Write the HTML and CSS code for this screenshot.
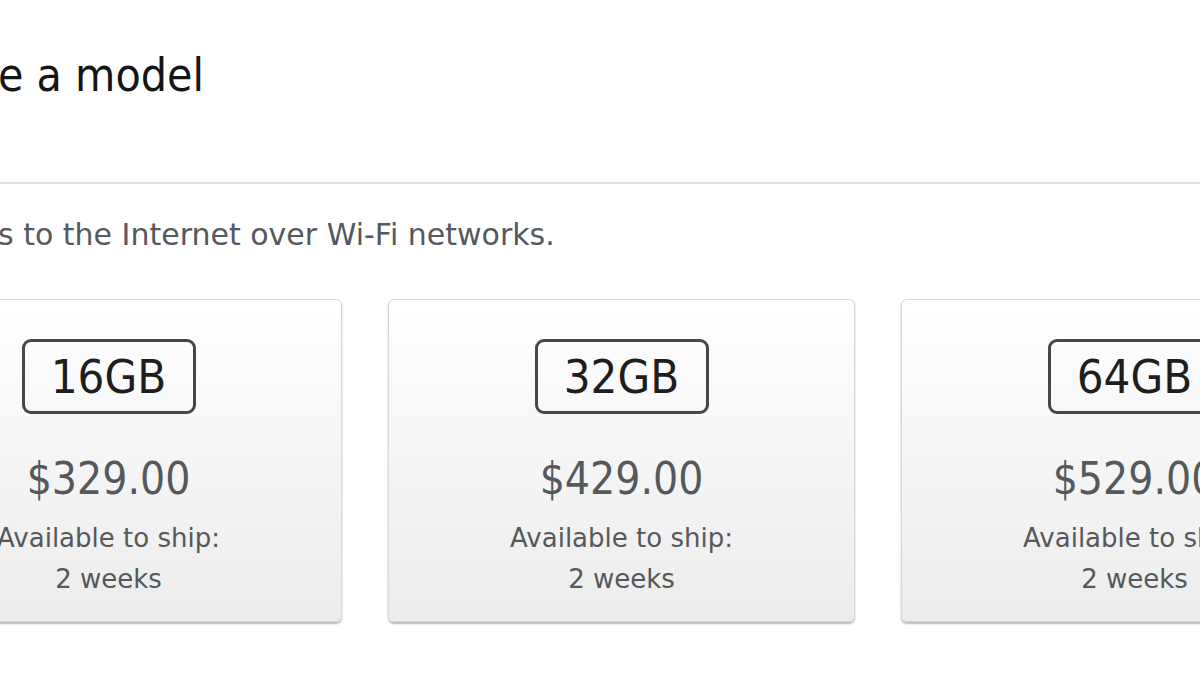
FILE: index.html
```html
<!DOCTYPE html>
<html>
<head>
<meta charset="utf-8">
<link rel="stylesheet" href="styles.css">
</head>
<body>
<div class="page">
  <h1 class="title">e a model</h1>
  <div class="rule"></div>
  <p class="lead">s to the Internet over Wi‑Fi networks.</p>
  <div class="cards">
    <div class="card">
      <div class="cap">16GB</div>
      <div class="price">$329.00</div>
      <div class="ship">Available to ship:</div>
      <div class="ship">2 weeks</div>
    </div>
    <div class="card">
      <div class="cap">32GB</div>
      <div class="price">$429.00</div>
      <div class="ship">Available to ship:</div>
      <div class="ship">2 weeks</div>
    </div>
    <div class="card">
      <div class="cap">64GB</div>
      <div class="price">$529.00</div>
      <div class="ship">Available to ship:</div>
      <div class="ship">2 weeks</div>
    </div>
  </div>
</div>
</body>
</html>
```

FILE: styles.css
```css
html, body {
  margin: 0;
  padding: 0;
  background: #fff;
  width: 1200px;
  height: 675px;
  overflow: hidden;
}
.page {
  font-family: "DejaVu Sans Condensed", "DejaVu Sans", sans-serif;
  font-stretch: condensed;
}
.title {
  margin: 52px 0 0 0;
  font-size: 46px;
  line-height: 46px;
  font-weight: normal;
  color: #151515;
  text-indent: -2px;
  white-space: nowrap;
}
.rule {
  margin-top: 84px;
  height: 2px;
  background: #dedede;
}
.lead {
  margin: 36px 0 0 0;
  font-family: "DejaVu Sans", sans-serif;
  font-stretch: normal;
  font-size: 30px;
  line-height: 30px;
  color: #55595d;
  text-indent: -2px;
  white-space: nowrap;
}
.cards {
  margin-top: 49px;
  margin-left: -125px;
  display: flex;
  gap: 46px;
}
.card {
  flex: 0 0 auto;
  width: 465px;
  height: 321px;
  border: 1px solid #d8d8d8;
  border-radius: 6px;
  background: linear-gradient(#ffffff, #ececec);
  box-shadow: 0 2px 2px rgba(0,0,0,0.28);
  display: flex;
  flex-direction: column;
  align-items: center;
  box-sizing: content-box;
}
.cap {
  margin-top: 39px;
  width: 168px;
  height: 69px;
  border: 3px solid #474747;
  border-radius: 9px;
  display: flex;
  align-items: center;
  justify-content: center;
  font-size: 47px;
  color: #1e1e1e;
}
.price {
  margin-top: 40px;
  font-size: 44px;
  line-height: 50px;
  color: #55595c;
}
.ship {
  font-family: "DejaVu Sans", sans-serif;
  font-stretch: normal;
  font-size: 26px;
  line-height: 41px;
  color: #55595c;
}
.price + .ship {
  margin-top: 14px;
}
```
